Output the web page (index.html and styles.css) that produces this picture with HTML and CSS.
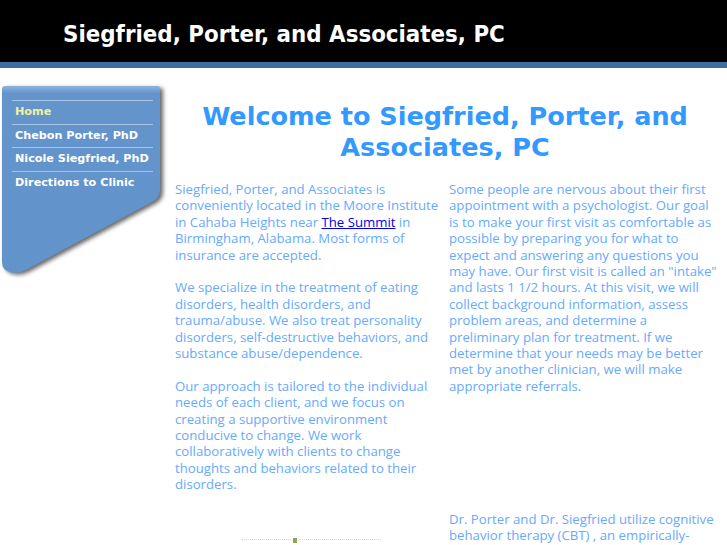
FILE: index.html
```html
<!DOCTYPE html>
<html>
<head>
<meta charset="utf-8">
<link rel="stylesheet" href="styles.css">
</head>
<body>
<header class="top">
  <h1 class="site-title">Siegfried, Porter, and Associates, PC</h1>
</header>
<div class="stripe"></div>
<div class="layout">
  <aside class="side">
    <svg class="side-bg" width="166" height="200" viewBox="0 0 166 200">
      <defs>
        <linearGradient id="g" x1="0" y1="0" x2="0" y2="1">
          <stop offset="0" stop-color="#8fb3dc"/>
          <stop offset="0.04" stop-color="#6394cc"/>
          <stop offset="1" stop-color="#6393cb"/>
        </linearGradient>
      </defs>
      <path d="M3 0 H156 Q158 0 158 3 V104 Q158 112 150 116 L24 184 Q16 188 8 186 Q0 184 0 176 V3 Q0 0 3 0 Z" fill="url(#g)"/>
    </svg>
    <ul class="menu">
      <li class="item current">Home</li>
      <li class="item">Chebon Porter, PhD</li>
      <li class="item">Nicole Siegfried, PhD</li>
      <li class="item">Directions to Clinic</li>
    </ul>
  </aside>
  <main class="content">
    <h2 class="welcome">Welcome to Siegfried, Porter, and Associates, PC</h2>
    <div class="cols">
      <div class="col">
        <p>Siegfried, Porter, and Associates is conveniently located in the Moore Institute in Cahaba Heights near <a href="#">The Summit</a> in Birmingham, Alabama. Most forms of insurance are accepted.</p>
        <p>We specialize in the treatment of eating disorders, health disorders, and trauma/abuse. We also treat personality disorders, self-destructive behaviors, and substance abuse/dependence.</p>
        <p>Our approach is tailored to the individual needs of each client, and we focus on creating a supportive environment conducive to change. We work collaboratively with clients to change thoughts and behaviors related to their disorders.</p>
        <div class="badge"><span class="badge-line"></span><span class="badge-mark"></span><span class="badge-line long"></span></div>
      </div>
      <div class="col right">
        <p>Some people are nervous about their first appointment with a psychologist. Our goal is to make your first visit as comfortable as possible by preparing you for what to expect and answering any questions you may have. Our first visit is called an "intake" and lasts 1 1/2 hours. At this visit, we will collect background information, assess problem areas, and determine a preliminary plan for treatment. If we determine that your needs may be better met by another clinician, we will make appropriate referrals.</p>
        <p class="later">Dr. Porter and Dr. Siegfried utilize cognitive behavior therapy (CBT) , an empirically-supported treatment for many disorders.</p>
      </div>
    </div>
  </main>
</div>
</body>
</html>
```
FILE: styles.css
```css
html, body {
  margin: 0;
  padding: 0;
  background: #ffffff;
  overflow: hidden;
}
body {
  font-family: "Open Sans", "DejaVu Sans", sans-serif;
}
.top {
  background: #000000;
  height: 62px;
  display: flex;
  align-items: center;
  padding-left: 63px;
}
.site-title {
  margin: 0;
  color: #ffffff;
  font-family: "DejaVu Sans Condensed", "DejaVu Sans", sans-serif;
  font-weight: bold;
  font-size: 23.8px;
  padding-top: 6px;
}
.stripe {
  height: 6px;
  background: #3c6ea4;
}
.layout {
  display: flex;
  align-items: flex-start;
  padding-top: 18px;
}
.side {
  position: relative;
  margin-left: 2px;
  width: 166px;
  height: 200px;
  flex: none;
}
.side-bg {
  position: absolute;
  left: 0;
  top: 0;
  filter: drop-shadow(3px 2px 2px rgba(0, 0, 0, 0.6));
}
.menu {
  position: relative;
  list-style: none;
  margin: 0;
  padding: 14px 0 0 10px;
  width: 141px;
}
.item {
  border-top: 1px solid #a9c5e6;
  color: #ffffff;
  font-family: "DejaVu Sans", sans-serif;
  font-weight: bold;
  font-size: 11.2px;
  line-height: 22.5px;
  padding-left: 3px;
  white-space: nowrap;
}
.item.current {
  color: #f2f0a0;
}
.content {
  flex: 1;
  padding-left: 2px;
  padding-right: 7px;
}
.welcome {
  margin: 0;
  padding-top: 15px;
  text-align: center;
  color: #3399ff;
  font-family: "DejaVu Sans", sans-serif;
  font-weight: bold;
  font-size: 25.5px;
  line-height: 31px;
}
.cols {
  display: grid;
  grid-template-columns: 274px 1fr;
  margin-top: 18px;
}
.col {
  padding-left: 5px;
  color: #66aaff;
  font-size: 13.2px;
  line-height: 16.4px;
}
.col.right {
  padding-right: 3px;
}
.col p {
  margin: 0 0 16.4px 0;
}
.col a {
  color: #0000ee;
}
.later {
  padding-top: 100px;
}
.badge {
  display: flex;
  align-items: center;
  gap: 2px;
  margin: 45px 0 0 66px;
  height: 5px;
}
.badge-line {
  width: 50px;
  height: 1px;
  border-top: 1px dotted #d4d7e0;
}
.badge-line.long {
  width: 82px;
}
.badge-mark {
  width: 4px;
  height: 5px;
  background: #8aa55a;
}
```
